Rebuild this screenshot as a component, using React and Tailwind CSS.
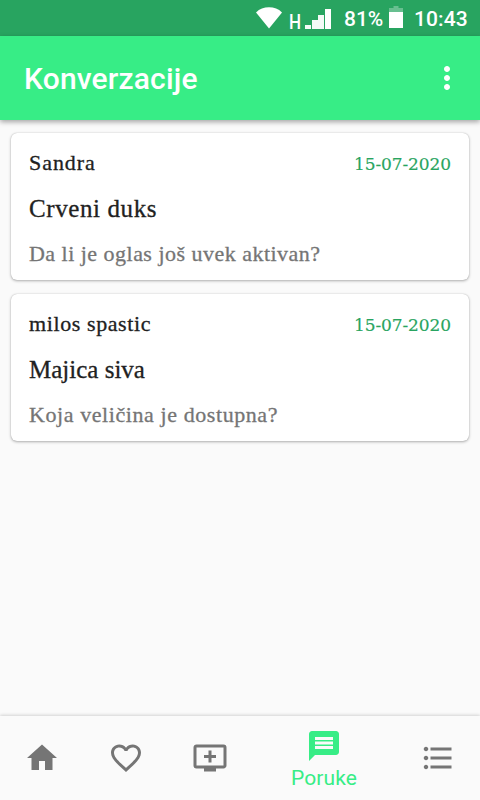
import React from 'react'
import { MdHome, MdFavoriteBorder, MdAddToQueue, MdMessage, MdFormatListBulleted, MdMoreVert } from 'react-icons/md'

const conversations = [
  {
    id: 1,
    name: 'Sandra',
    nameClass: 'tracking-[0.95px]',
    date: '15-07-2020',
    title: 'Crveni duks',
    titleClass: 'tracking-[0.6px]',
    message: 'Da li je oglas još uvek aktivan?',
    messageClass: 'tracking-[0.48px]',
  },
  {
    id: 2,
    name: 'milos spastic',
    nameClass: 'tracking-[0.6px]',
    date: '15-07-2020',
    title: 'Majica siva',
    titleClass: 'tracking-[0px]',
    message: 'Koja veličina je dostupna?',
    messageClass: 'tracking-[0.58px]',
  },
]

const StatusBar = () => {
  return (
    <div className="h-9 shrink-0 bg-[#28a460] flex items-start text-white font-medium text-[21px] leading-6 pl-64">
      <svg className="w-[26px] h-[22px] mt-[7px] shrink-0" viewBox="0 0 26 22" fill="currentColor">
        <path d="M13 21.500L0 5.500C3.500 1.800 8 .3 13 .3S22.500 1.800 26 5.500z" />
      </svg>
      <span className="w-[11px] ml-2 mt-[10px] text-[20px] flex justify-center"><span className="scale-x-[0.85]">H</span></span>
      <svg className="w-[26px] h-5 ml-1 mt-[9px] shrink-0" viewBox="0 0 26 20" fill="currentColor">
        <path d="M0 16h6v4H0zM7 11h6v9H7zM13 6h6v14h-6z" opacity="0.95" />
        <path d="M20 0h6v20h-6z" />
      </svg>
      <span className="w-[39px] ml-[13px] mt-[7px]">81%</span>
      <svg className="w-[14px] h-[22px] ml-[6px] mt-[6px] shrink-0" viewBox="0 0 14 22" fill="currentColor">
        <path d="M4.500 0h5v2H14v4H0V2h4.500z" opacity="0.3" />
        <path d="M0 6h14v16H0z" />
      </svg>
      <span className="ml-[11px] mt-[7px] tracking-[0.1px]">10:43</span>
    </div>
  )
}

const Card = ({ item }) => {
  return (
    <div className="h-[147px] bg-white rounded-md px-[18px] flex flex-col font-['Liberation_Serif',serif] text-[#212121] whitespace-nowrap shadow-[0_1px_3px_rgba(0,0,0,0.3),0_0_1px_rgba(0,0,0,0.25)]">
      <div className="flex justify-between mt-[18px] h-6 leading-6">
        <span className={`text-[22px] [-webkit-text-stroke:0.3px_currentColor] ${item.nameClass}`}>{item.name}</span>
        <span className="text-[17px] leading-[27px] text-[#28a460] font-['DejaVu_Serif',serif] tracking-[-0.1px] [-webkit-text-stroke:0.15px_currentColor]">{item.date}</span>
      </div>
      <h2 className={`mt-5 h-7 leading-7 text-[25px] [-webkit-text-stroke:0.3px_currentColor] ${item.titleClass}`}>{item.title}</h2>
      <p className={`mt-[19px] h-6 leading-6 text-[22px] text-[#757575] [-webkit-text-stroke:0.3px_currentColor] ${item.messageClass}`}>{item.message}</p>
    </div>
  )
}

const App = () => {
  return (
    <div className="w-[480px] h-[800px] flex flex-col bg-[#fafafa] overflow-hidden font-[Roboto,sans-serif]">
      <StatusBar />
      <header className="h-[84px] shrink-0 bg-[#37ed86] flex items-center justify-between pl-6 pr-[15px] text-white shadow-[0_2px_5px_rgba(0,0,0,0.35)]">
        <h1 className="text-[30px] font-medium leading-9 pt-[2px] tracking-[0.15px]">Konverzacije</h1>
        <MdMoreVert className="size-9" />
      </header>

      <main className="flex-1 flex flex-col gap-[14px] pt-[13px] px-[11px]">
        {conversations.map((item) => (
          <Card key={item.id} item={item} />
        ))}
      </main>

      <nav className="h-[84px] shrink-0 bg-[#fafafa] flex items-center text-[#757575] shadow-[0_-1px_3px_rgba(0,0,0,0.16)]">
        <div className="w-[84px] flex justify-center">
          <MdHome className="size-9" />
        </div>
        <div className="w-[84px] flex justify-center">
          <MdFavoriteBorder className="size-9" />
        </div>
        <div className="w-[84px] flex justify-center">
          <MdAddToQueue className="size-9" />
        </div>
        <div className="w-36 flex flex-col items-center pt-[2px] text-[#37ed86]">
          <MdMessage className="size-9" />
          <span className="text-[21px] leading-6 mt-[2px] tracking-[0.1px]">Poruke</span>
        </div>
        <div className="w-[84px] flex justify-center">
          <MdFormatListBulleted className="size-9" />
        </div>
      </nav>
    </div>
  )
}

export default App
